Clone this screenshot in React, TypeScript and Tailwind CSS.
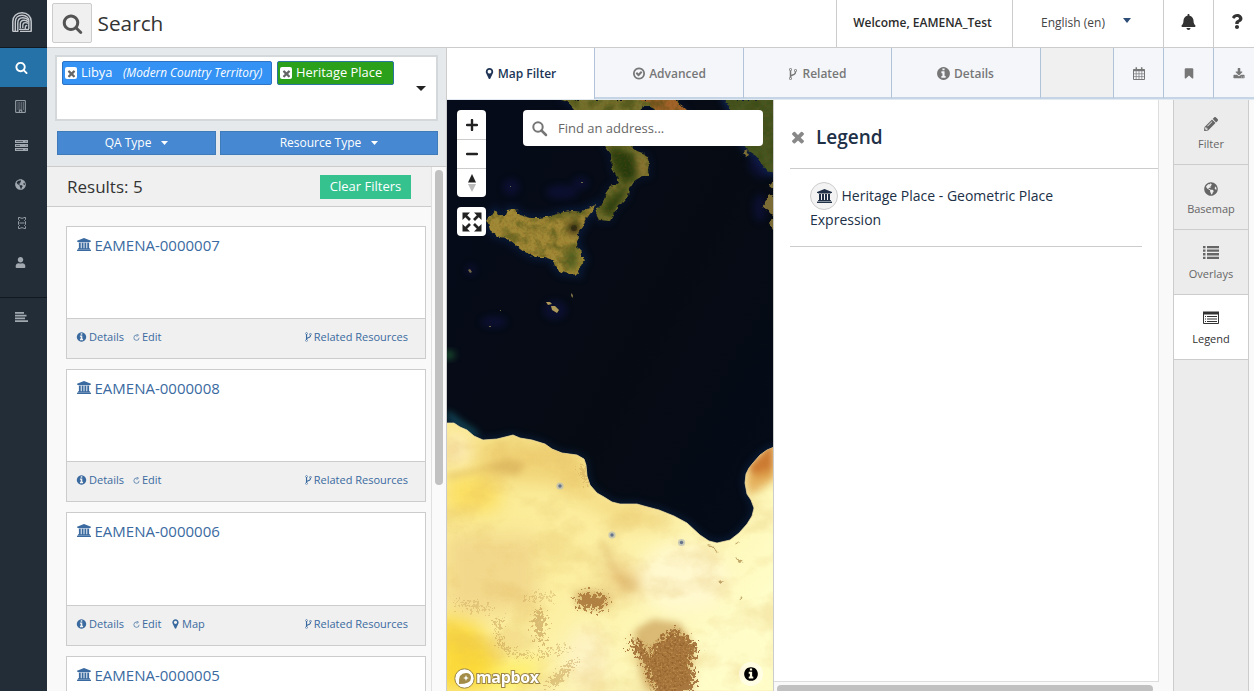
import React from "react";
import { FaBell, FaGlobeAmericas, FaPencilAlt, FaUser, FaQuestion } from "react-icons/fa";

const P = {
  search:
    "M1216 832q0-185-131.5-316.5t-316.5-131.5-316.5 131.5-131.5 316.5 131.5 316.5 316.5 131.5 316.5-131.5 131.5-316.5zm512 832q0 52-38 90t-90 38q-54 0-90-38l-343-342q-179 124-399 124-143 0-273.5-55.5t-225-150-150-225-55.5-273.5 55.5-273.5 150-225 225-150 273.5-55.5 273.5 55.5 225 150 150 225 55.5 273.5q0 220-124 399l343 343q37 37 37 90z",
  fork:
    "M672 1472q0-40-28-68t-68-28-68 28-28 68 28 68 68 28 68-28 28-68zm0-1152q0-40-28-68t-68-28-68 28-28 68 28 68 68 28 68-28 28-68zm640 128q0-40-28-68t-68-28-68 28-28 68 28 68 68 28 68-28 28-68zm96 0q0 52-26 96.5t-70 69.5q-2 287-226 414-67 38-203 81-128 40-169.5 71t-41.5 100v26q44 25 70 69.5t26 96.5q0 80-56 136t-136 56-136-56-56-136q0-52 26-96.5t70-69.5v-820q-44-25-70-69.5t-26-96.5q0-80 56-136t136-56 136 56 56 136q0 52-26 96.5t-70 69.5v497q54-26 154-57 55-17 87.5-29.5t70.5-31 59-39.5 40.5-51 28-69.5 8.5-91.5q-44-25-70-69.5t-26-96.5q0-80 56-136t136-56 136 56 56 136z",
  marker:
    "M1152 640q0-106-75-181t-181-75-181 75-75 181 75 181 181 75 181-75 75-181zm256 0q0 109-33 179l-364 774q-16 33-47.5 52t-67.5 19-67.5-19-46.5-52l-365-774q-33-70-33-179 0-212 150-362t362-150 362 150 150 362z",
  info:
    "M1152 1376v-160q0-14-9-23t-23-9h-96v-512q0-14-9-23t-23-9h-320q-14 0-23 9t-9 23v160q0 14 9 23t23 9h96v320h-96q-14 0-23 9t-9 23v160q0 14 9 23t23 9h448q14 0 23-9t9-23zm-128-896v-160q0-14-9-23t-23-9h-192q-14 0-23 9t-9 23v160q0 14 9 23t23 9h192q14 0 23-9t9-23zm640 416q0 209-103 385.5t-279.5 279.5-385.5 103-385.5-103-279.5-279.5-103-385.5 103-385.5 279.5-279.5 385.5-103 385.5 103 279.5 279.5 103 385.5z",
  university:
    "M960 0l960 384v128h-128q0 26-20.5 45t-48.5 19h-1526q-28 0-48.5-19t-20.5-45h-128v-128zm-704 640h256v768h128v-768h256v768h128v-768h256v768h128v-768h256v768h59q28 0 48.5 19t20.5 45v64h-1664v-64q0-26 20.5-45t48.5-19h59v-768zm1595 960q28 0 48.5 19t20.5 45v128h-1920v-128q0-26 20.5-45t48.5-19h1782z",
  bookmark:
    "M1420 128q23 0 44 9 33 13 52.5 41t19.5 62v1289q0 34-19.5 62t-52.5 41q-19 8-44 8-48 0-83-32l-441-424-441 424q-36 33-83 33-23 0-44-9-33-13-52.5-41t-19.5-62v-1289q0-34 19.5-62t52.5-41q21-9 44-9h1048z",
  check:
    "M1299 813l-422 422q-19 19-45 19t-45-19l-294-294q-19-19-19-45t19-45l102-102q19-19 45-19t45 19l147 147 275-275q19-19 45-19t45 19l102 102q19 19 19 45t-19 45zm141 83q0-148-73-273t-198-198-273-73-273 73-198 198-73 273 73 273 198 198 273 73 273-73 198-198 73-273zm224 0q0 209-103 385.5t-279.5 279.5-385.5 103-385.5-103-279.5-279.5-103-385.5 103-385.5 279.5-279.5 385.5-103 385.5 103 279.5 279.5 103 385.5z",
  times:
    "M1490 1322q0 40-28 68l-136 136q-28 28-68 28t-68-28l-294-294-294 294q-28 28-68 28t-68-28l-136-136q-28-28-28-68t28-68l294-294-294-294q-28-28-28-68t28-68l136-136q28-28 68-28t68 28l294 294 294-294q28-28 68-28t68 28l136 136q28 28 28 68t-28 68l-294 294 294 294q28 28 28 68z",
  download:
    "M1344 1344q0-26-19-45t-45-19-45 19-19 45 19 45 45 19 45-19 19-45zm256 0q0-26-19-45t-45-19-45 19-19 45 19 45 45 19 45-19 19-45zm128-224v320q0 40-28 68t-68 28h-1472q-40 0-68-28t-28-68v-320q0-40 28-68t68-28h465l135 136q58 56 136 56t136-56l136-136h464q40 0 68 28t28 68zm-325-569q17 41-14 70l-448 448q-18 19-45 19t-45-19l-448-448q-31-29-14-70 17-39 59-39h256v-448q0-26 19-45t45-19h256q26 0 45 19t19 45v448h256q42 0 59 39z",
};

function Icon({ d, className, box = "0 0 1792 1792" }: { d: string; className: string; box?: string }) {
  return (
    <svg viewBox={box} className={"shrink-0 fill-current " + className}>
      <path d={d} />
    </svg>
  );
}

const University = ({ className }: { className: string }) => (
  <Icon d={P.university} box="0 0 1920 1792" className={className} />
);

const Caret = ({ className }: { className: string }) => (
  <svg viewBox="0 0 10 5" preserveAspectRatio="none" className={"shrink-0 fill-current " + className}>
    <path d="M0 0h10L5 5z" />
  </svg>
);

function CalendarIcon() {
  return (
    <svg viewBox="0 0 12 13" className="h-[13px] w-3 fill-none stroke-current">
      <path d="M.5 2.5h11v10H.5z" />
      <path d="M.5 3.3h11" strokeWidth="1.8" />
      <path d="M3.2 4v8.500M6 4v8.500M8.800 4v8.500M.5 6.800h11M.5 9.600h11" strokeWidth=".7" />
      <path d="M3.300.3v3M8.700.3v3" strokeWidth="1.500" />
    </svg>
  );
}

function NavItem({ children, active }: { children: React.ReactNode; active?: boolean }) {
  return (
    <div
      className={
        active
          ? "flex h-[39px] items-center justify-center bg-[#2572a9] pr-1 text-white"
          : "flex h-[39px] items-center justify-center pr-1.5 text-[#a1a8af]"
      }
    >
      {children}
    </div>
  );
}

function Sidebar() {
  return (
    <nav className="flex w-[47px] shrink-0 flex-col bg-[#232d38]">
      <div className="flex h-12 items-center justify-center border-b border-[#111820] pb-1 pr-[3px]">
        <svg viewBox="0 0 20 20" className="h-5 w-5 fill-none stroke-[#c3c7cb]">
          <path d="M.8 19.500V9.500C.8 4.500 4.500.8 10 .8s9.200 3.700 9.200 8.700v10" strokeWidth="1.500" />
          <path d="M3.300 19.500V10c0-4 2.700-6.800 6.700-6.800 4.500 0 6.800 3 6.800 5.800v8" strokeWidth="1.400" />
          <path d="M5.800 19.500V11c0-3.300 2-5.300 5-5.300 2.500 0 4.200.8 5.500 2.300" strokeWidth="1.400" />
          <path d="M8.300 16.500V12c0-2.300 1.500-3.800 3.700-3.800 1.800 0 3.200.6 4.200 1.800" strokeWidth="1.400" />
          <path d="M10.800 16V13.500c0-1.800 1-2.800 2.700-2.800 1 0 1.800.2 2.500.8M13.300 17v-2c0-1 .8-1.500 2-1.500M.8 19.300h5.500M7 17.300h10M8 19.300h11.500" strokeWidth="1.300" />
        </svg>
      </div>
      <NavItem active>
        <Icon d={P.search} className="h-[13px] w-[13px]" />
      </NavItem>
      <NavItem>
        <svg viewBox="0 0 11 13" className="h-[13px] w-[11px] fill-none stroke-current">
          <path d="M.7.600h9.600v11.800H.7z" />
          <path d="M2.500 3h6.500M2.500 5h6.500M2.500 7h6.500M2.500 9h6.500" strokeDasharray="1.100 .7" strokeWidth="1.100" />
          <path d="M4.300 12.500v-2.300h2.500v2.300" />
        </svg>
      </NavItem>
      <NavItem>
        <svg viewBox="0 0 13 11" className="ml-0.5 h-[11px] w-[13px] fill-current">
          <path d="M0 0h13v3H0zM0 4h13v3H0zM0 8h13v3H0z" />
          <path d="M1 1h7v1H1zM1 5h4v1H1zM1 9h7v1H1zM10.500 1h1v1h-1zM10.500 5h1v1h-1zM10.500 9h1v1h-1z" fill="#232d38" opacity=".6" />
        </svg>
      </NavItem>
      <NavItem>
        <FaGlobeAmericas className="h-[11px] w-[11px]" />
      </NavItem>
      <NavItem>
        <svg viewBox="0 0 8 12" className="mb-0.5 ml-0.5 h-3 w-2 fill-none stroke-current">
          <path d="M2.500 .5H.5V2.500L1.500 3.500.5 4.500v3l1 1-1 1v2H2.500M5.500 .5h2v2l-1 1 1 1v3l-1 1 1 1v2h-2M1.500 6h5M2.500 1.200h3M2.500 10.800h3" strokeWidth=".9" />
        </svg>
      </NavItem>
      <NavItem>
        <FaUser className="h-[11px] w-[11px]" />
      </NavItem>
      <div className="mt-[15px] border-t border-[#111820]">
        <div className="flex h-[38px] items-center justify-center pr-1">
          <svg viewBox="0 0 13 10" className="h-2.5 w-[13px] fill-[#a1a8af]">
            <path d="M0 0h9v1.700H0zM0 2.700h11.500v1.700H0zM0 5.500h10v1.700H0zM0 8.300h13v1.700H0z" />
          </svg>
        </div>
      </div>
    </nav>
  );
}

function Header() {
  return (
    <header className="flex h-12 shrink-0 border-b border-[#ccc] bg-white text-[#333]">
      <div className="flex flex-1 items-start pl-[5px] pt-[3px]">
        <div className="flex h-10 w-10 items-center justify-center rounded-[2px] border border-[#ccc] bg-[#f0f0f0]">
          <Icon d={P.search} className="h-[21px] w-[21px] text-[#545454]" />
        </div>
        <h1 className="pl-[5.500px] pt-[3px] text-[20.800px] leading-[34px] text-[#333]">Search</h1>
      </div>
      <div className="flex w-[176px] items-center justify-center border-l border-[#ccc] pb-0.5 pr-1 text-[12px] font-semibold text-[#2b2b2b]">
        Welcome, EAMENA_Test
      </div>
      <div className="flex w-[151px] items-center border-l border-[#ccc] pb-0.5 pl-[28px] text-[12px] text-[#444]">
        English (en)
        <Caret className="mb-1 ml-[18px] h-[5px] w-2 text-[#2d4d77]" />
      </div>
      <div className="flex w-[50px] items-center justify-center border-l border-[#ccc] pb-1">
        <FaBell className="h-4 w-[15px]" />
      </div>
      <div className="flex w-[41px] items-center border-l border-[#ccc] pb-1 pl-[17px]">
        <FaQuestion className="h-[15px] w-3" />
      </div>
    </header>
  );
}

function Remove() {
  return (
    <span className="flex h-3 w-3 items-center justify-center rounded-[2px] bg-white text-[#666]">
      <Icon d={P.times} className="h-[11px] w-[11px]" />
    </span>
  );
}

function Card({ id, map, cut }: { id: string; map?: boolean; cut?: boolean }) {
  return (
    <div className="shrink-0 border border-[#ccc] bg-white text-[#3a6a9f]">
      <div className={"flex items-start border-b border-[#ccc] pl-2.5 pt-2 " + (map ? "h-[93px]" : "h-[92px]")}>
        <University className="mt-[3px] h-[13px] w-[14px]" />
        <span className="ml-[3.500px] text-[15px] leading-5">{id}</span>
      </div>
      {!cut && (
        <div className="flex h-[39px] items-start bg-[#f0f0f0] pl-[9px] pr-[17px] pt-2.5 text-[11px] leading-4">
          <span className="flex w-[57px] items-center">
            <Icon d={P.info} className="mr-[2px] h-[12px] w-[11px]" />
            Details
          </span>
          <span className="flex w-[37px] items-center">
            <svg viewBox="0 0 8 8" className="mr-[2px] h-[7px] w-[7px] fill-none stroke-current">
              <path d="M4.500 1.300A3 3 0 1 0 7 4.300M4 0l2.300 1.400L4 3" strokeWidth=".8" />
            </svg>
            Edit
          </span>
          {map && (
            <span className="flex items-center">
              <Icon d={P.marker} className="mr-px h-[12px] w-[11px]" />
              Map
            </span>
          )}
          <span className="ml-auto flex items-center">
            <Icon d={P.fork} className="h-[12px] w-[11px]" />
            Related Resources
          </span>
        </div>
      )}
    </div>
  );
}

function Results() {
  return (
    <section className="flex w-[400px] shrink-0 flex-col border-r border-[#ccc]">
      <div className="h-[119px] shrink-0 border-b border-[#ccc] bg-[#e5e9ec] pl-2 pt-[7px]">
        <div className="flex h-[66px] w-[383px] border-2 border-[#d5d8db] bg-white pl-[5px] pt-1">
          <div className="flex h-6 w-[210px] items-center whitespace-nowrap rounded-[2px] border border-[#2f74c4] bg-[#3392f3] pl-[2px] text-[12.900px] text-white">
            <Remove />
            <span className="ml-[4px]">Libya</span>
            <span className="ml-[10.500px] text-[11.800px] italic">(Modern Country Territory)</span>
          </div>
          <div className="ml-[5px] flex h-6 w-[117px] items-center rounded-[2px] border border-[#2b75a0] bg-[#2ba01b] pl-[2px] text-[12.900px] text-white">
            <Remove />
            <span className="ml-[4px]">Heritage Place</span>
          </div>
          <Caret className="ml-auto mr-2.5 mt-[24.500px] h-[5px] w-2.5 text-[#222]" />
        </div>
        <div className="mt-2.5 flex gap-1 pl-0.5 text-[12px] text-white">
          <div className="flex h-6 w-[159px] items-center justify-center border border-[#3f7ab9] bg-[#4688d1]">
            QA Type <Caret className="ml-2.5 h-1 w-[7px]" />
          </div>
          <div className="flex h-6 w-[218px] items-center justify-center border border-[#3f7ab9] bg-[#4688d1]">
            Resource Type <Caret className="ml-2.5 h-1 w-[7px]" />
          </div>
        </div>
      </div>
      <div className="flex min-h-0 flex-1">
        <div className="flex w-[384px] flex-col overflow-hidden bg-[#f9f9f9]">
          <div className="flex h-10 shrink-0 items-center justify-between border-b border-[#ccc] bg-[#f0f0f0] pl-5 pr-5">
            <span className="text-[17px] text-[#333]">Results: 5</span>
            <span className="flex h-6 w-[91px] items-center justify-center bg-[#35c28f] text-[13px] text-white">Clear Filters</span>
          </div>
          <div className="flex flex-col gap-2.5 pl-[19px] pr-[5px] pt-[19px]">
            <Card id="EAMENA-0000007" />
            <Card id="EAMENA-0000008" />
            <Card id="EAMENA-0000006" map />
            <Card id="EAMENA-0000005" cut />
          </div>
        </div>
        <div className="flex-1 border-l border-[#e0e0e0] bg-[#fafafa] pl-[3px] pt-[3px]">
          <div className="h-[315px] w-2 rounded-full bg-[#c1c1c1]" />
        </div>
      </div>
    </section>
  );
}

const tab =
  "flex h-[51px] shrink-0 items-center justify-center gap-[3px] border-b-2 border-r border-b-[#c5d5e6] border-r-[#b1c3d8] bg-[#f4f6fa] pt-0.5 text-[12px] font-semibold text-[#777] ";

function Tabs() {
  return (
    <div className="flex h-[52px] shrink-0 border-b border-[#e3e9f0] bg-[#f4f6fa]">
      <div className="flex w-[148px] shrink-0 items-center justify-center gap-[2px] border-r border-[#b1c3d8] bg-white pr-0.5 text-[12px] font-semibold text-[#203556]">
        <Icon d={P.marker} className="h-[15px] w-[13px]" />
        Map Filter
      </div>
      <div className={tab + "w-[149px]"}>
        <Icon d={P.check} className="h-[15px] w-[14px]" />
        Advanced
      </div>
      <div className={tab + "w-[148px] pr-0.5"}>
        <Icon d={P.fork} className="-mr-px h-[14px] w-[14px]" />
        Related
      </div>
      <div className={tab + "w-[149px] pr-0.5"}>
        <Icon d={P.info} className="h-[15px] w-[15px]" />
        Details
      </div>
      <div className="h-[51px] w-[73px] shrink-0 border-b-2 border-r border-b-[#c5d5e6] border-r-[#b1c3d8] bg-[#f0f0f0]" />
      <div className={tab + "w-[50px]"}>
        <CalendarIcon />
      </div>
      <div className={tab + "w-[50px]"}>
        <Icon d={P.bookmark} className="h-[13px] w-[12px]" />
      </div>
      <div className={tab + "w-[50px]"}>
        <Icon d={P.download} className="h-3 w-3" />
      </div>
    </div>
  );
}

const AFRICA =
  "M0 323L7 323 13 327 20 330 27 336 36 340 50 339 58 337 66 335 73 338 85 340 98 344 105 349 115 353 130 355 137 359 139 365 140 376 143 385 150 393 157 397 165 402 173 404 190 404 197 406 212 410 227 416 240 423 253 435 262 441 270 443 283 440 292 433 300 424 305 416 307 408 304 400 300 394 298 383 299 374 302 368 306 363 313 355 320 350 327 347V591H0Z";
const ITALY =
  "M113 0L121 2 128 10 150 30 158 46 164 54 165 68 170 77 172 83 164 86 160 91 158 97 156 103 150 109 149 114 152 120 163 121 166 115 171 105 176 102 181 96 182 88 186 82 190 79 196 76 202 76 201 70 202 61 198 54 190 51 184 46 180 25 190 12 197 6 203 6 209 12 240 13 230 0Z";
const GREECE = "M278 0L283 8 287 25 294 35 297 45 301 51 309 56 314 63 320 71 327 73V0Z";
const SICILY =
  "M40 119L44 116 48 110 51 115 59 115 61 110 68 109 73 115 84 118 92 118 104 116 117 112 127 111 133 112 140 109 148 105 146 110 139 119 136 127 131 133 130 147 135 152 133 156 138 160 135 165 131 171 132 175 124 174 114 172 108 166 106 160 97 157 88 157 78 152 70 146 62 139 50 136 43 130Z";

function SatelliteMap() {
  return (
    <svg viewBox="0 0 326 591" className="block h-[591px] w-[326px]">
      <defs>
        <linearGradient id="sea" x1="0" y1="0" x2="1" y2="1">
          <stop offset="0" stopColor="#060b1b" />
          <stop offset=".5" stopColor="#060b13" />
          <stop offset="1" stopColor="#040b1a" />
        </linearGradient>
        <linearGradient id="sand" x1="0" y1="0" x2="1" y2=".6">
          <stop offset="0" stopColor="#fae98f" />
          <stop offset=".5" stopColor="#fcee9f" />
          <stop offset="1" stopColor="#fffdc8" />
        </linearGradient>
        <filter id="soft" x="-50%" y="-50%" width="200%" height="200%" colorInterpolationFilters="sRGB">
          <feGaussianBlur stdDeviation="9" />
        </filter>
        <filter id="glow" x="-50%" y="-50%" width="200%" height="200%" colorInterpolationFilters="sRGB">
          <feGaussianBlur stdDeviation="3.500" />
        </filter>
        <filter id="rough" x="-20%" y="-20%" width="140%" height="140%" colorInterpolationFilters="sRGB">
          <feTurbulence type="fractalNoise" baseFrequency=".25" numOctaves="3" seed="4" result="n" />
          <feDisplacementMap in="SourceGraphic" in2="n" scale="4" xChannelSelector="R" yChannelSelector="G" />
        </filter>
        <filter id="ragged" x="-30%" y="-30%" width="160%" height="160%" colorInterpolationFilters="sRGB">
          <feTurbulence type="fractalNoise" baseFrequency=".3" numOctaves="4" seed="9" result="n" />
          <feDisplacementMap in="SourceGraphic" in2="n" scale="24" xChannelSelector="R" yChannelSelector="G" />
          <feGaussianBlur stdDeviation=".7" />
        </filter>
        <filter id="landTexture" x="0" y="0" width="100%" height="100%" colorInterpolationFilters="sRGB">
          <feTurbulence type="fractalNoise" baseFrequency=".09" numOctaves="5" seed="7" />
          <feColorMatrix values="0 0 0 0 .2  0 0 0 0 .27  0 0 0 0 .06  2.800 2 0 0 -2.200" />
        </filter>
        <filter id="sandTexture" x="0" y="0" width="100%" height="100%" colorInterpolationFilters="sRGB">
          <feTurbulence type="fractalNoise" baseFrequency=".022 .03" numOctaves="6" seed="12" />
          <feColorMatrix values="0 0 0 0 .87  0 0 0 0 .71  0 0 0 0 .36  2.800 1.500 0 0 -1.950" />
        </filter>
        <filter id="speckle" x="0" y="0" width="100%" height="100%" colorInterpolationFilters="sRGB">
          <feTurbulence type="fractalNoise" baseFrequency=".4" numOctaves="3" seed="5" />
          <feColorMatrix values="0 0 0 0 .5  0 0 0 0 .3  0 0 0 0 .1  3 0 0 0 -1.400" />
        </filter>
        <filter id="lightSpeckle" x="0" y="0" width="100%" height="100%" colorInterpolationFilters="sRGB">
          <feTurbulence type="fractalNoise" baseFrequency=".5" numOctaves="2" seed="15" />
          <feColorMatrix values="0 0 0 0 .85  0 0 0 0 .65  0 0 0 0 .35  4 0 0 0 -2.100" />
        </filter>
        <clipPath id="africa"><path d={AFRICA} /></clipPath>
        <clipPath id="north"><path d={ITALY + GREECE + SICILY} /></clipPath>
        <clipPath id="massif"><path d="M186 537l8 2 9 6 13-11 18-6 9 11 7 11-9 17 2 13-15 11H202l-4-16 1-18-10-4z" /></clipPath>
      </defs>
      <rect width="326" height="591" fill="url(#sea)" />
      <g filter="url(#glow)" fill="none" strokeWidth="6" opacity=".55">
        <path d={SICILY} stroke="#0b2a5c" />
        <path d={ITALY} stroke="#0b1f4c" strokeWidth="4" />
        <path d={GREECE} stroke="#183b8c" />
        <path d={AFRICA} stroke="#0e3365" strokeWidth="4" />
        <path d="M0 313l12 10 18 12" stroke="#1c8094" />
      </g>
      <g filter="url(#glow)" fill="#17185c" opacity=".38">
        <circle cx="64" cy="87" r="8" />
        <ellipse cx="115" cy="92" rx="16" ry="7" />
        <ellipse cx="134" cy="83" rx="8" ry="6" />
        <ellipse cx="108" cy="210" rx="12" ry="10" />
        <ellipse cx="47" cy="222" rx="13" ry="6" />
        <circle cx="24" cy="170" r="5" />
        <ellipse cx="311" cy="68" rx="8" ry="12" transform="rotate(-40 311 68)" />
        <ellipse cx="313" cy="108" rx="7" ry="14" />
      </g>
      <ellipse cx="2" cy="255" rx="6" ry="4" fill="#1c5732" filter="url(#glow)" />
      <g filter="url(#rough)">
        <path d={SICILY} fill="#a08936" />
        <path d={ITALY} fill="#72702c" />
        <path d={GREECE} fill="#465621" />
        <path d="M190 0h38l12 11-32-1-7-8z" fill="#a16329" />
        <path d="M315 107l5-7 2-6 5 3v20l-5-5zM322 122l5-4v12zM322 86l5-5v9zM299 50l3 5-3 2-3-4z" fill="#7a6c34" />
      </g>
      <g clipPath="url(#north)">
        <g filter="url(#glow)">
          <path d="M160 46l25 7 6 23-14 8-10-16zM153 110l18-18 12-8-7 14-12 18z" fill="#263b0d" />
          <path d="M190 54l11 8v13l-10 1z" fill="#8d7734" />
          <path d="M73 115l60-7 14-5-14 12-34 1z" fill="#2b4013" opacity=".75" />
          <path d="M117 155l14-8-1 22-8 1z" fill="#4e5f20" />
        </g>
        <circle cx="127" cy="128" r="6" fill="#28230f" filter="url(#glow)" />
        <circle cx="127" cy="128" r="3" fill="#28230f" opacity=".7" />
        <rect width="326" height="180" filter="url(#landTexture)" opacity=".45" />
        <rect width="326" height="180" filter="url(#speckle)" opacity=".25" />
      </g>
      <g fill="#ae995a">
        <path d="M99 202l4 0 2 2-4 1zM104 206l4 0 4 4-2 3-5-3z" />
        <path d="M21 170l2-1 2 3-2 1zM42 226h2v1h-2zM53 210h1v1h-1zM124 193l2 2v3l-2-2zM63 86h1v1h-1zM134 82h2v1h-2z" opacity=".65" />
      </g>
      <path d={AFRICA} fill="url(#sand)" stroke="#f4e4af" strokeWidth=".7" />
      <g clipPath="url(#africa)">
        <g filter="url(#soft)">
          <path d="M30 340h105l6 25 3 30 60 18 35 14-60-2-70-40-80-8z" fill="#eac361" opacity=".6" />
          <path d="M0 376l30-2 25 12-5 25-50 2z" fill="#fbdf62" />
          <path d="M0 435h90v75l-75 5-15-10z" fill="#efd287" opacity=".75" />
          <path d="M-12 515l40 10 25 32 0 34H-12z" fill="#fbd93a" />
          <path d="M50 560h50l-25 31H35z" fill="#fdee6a" />
          <path d="M160 455l33 18v22l-28 0z" fill="#eccb84" />
          <ellipse cx="237" cy="478" rx="45" ry="35" fill="#fff8cf" />
          <ellipse cx="140" cy="560" rx="22" ry="34" fill="#fdf2c2" />
          <ellipse cx="290" cy="555" rx="35" ry="38" fill="#fffcc8" />
          <ellipse cx="8" cy="350" rx="15" ry="18" fill="#fdecba" />
        </g>
        <rect y="300" width="326" height="291" filter="url(#sandTexture)" opacity=".25" />
        <g filter="url(#glow)">
          <path d="M327 340l-15 15-12 12 8 12 19-4z" fill="#c9732a" opacity=".95" />
          <path d="M300 375l27-7v12l-25 14z" fill="#e0a34c" opacity=".8" />
          <path d="M0 374l30-5 32-11 17 6-9 12-27-6-42 9z" fill="#c99e4c" opacity=".45" />
          <path d="M188 530l18-11 27 4 12 20 0 48h-46l-8-25z" fill="#cda55f" opacity=".75" />
          <path d="M126 494l14-5 22 4 2 10-10 8-24-4z" fill="#c4934f" opacity=".5" />
        </g>
        <g filter="url(#ragged)" fill="#b88b45">
          <path d="M130 496l12-4 17 4 2 8-10 6-20-3z" fill="#a87538" opacity=".85" />
          <path d="M88 512l8-2 3 12-4 12 4 8-8 0-4-16z" opacity=".5" />
          <path d="M181 543l8-4 10 11 3 7 10-17 14-11 14 8 12 10-10 17 8 12-11 20h-28l-10-24-8-14z" fill="#a3713a" opacity=".92" />
          <path d="M48 520l8-3-4 18 8 14 20 5 48-8-30 9-26 1-20-8z" opacity=".4" />
          <path d="M100 588l10-16 23-14-15 18-12 12z" opacity=".4" />
          <path d="M132 365l6 2 3 16-4 1zM78 496l29-2v4l-29 2zM3 500l22 4 18 3v3l-21-2z" opacity=".3" />
        </g>
        <path d="M150 440l11 5 10 28 20 8 1 10-14 0-16-24z" fill="#cda055" filter="url(#glow)" opacity=".3" />
        <path d="M260 444l5 1 7 9zM288 444l4-3-2 4zM288 457l8 5-4 1zM271 482l6-1-3 3zM292 498l3-2-2 4z" fill="#98702f" opacity=".6" filter="url(#rough)" />
        <g clipPath="url(#massif)">
          <rect x="180" y="520" width="75" height="71" filter="url(#speckle)" opacity=".5" />
          <rect x="180" y="520" width="75" height="71" filter="url(#lightSpeckle)" opacity=".5" />
        </g>
      </g>
      {[[113, 386], [165, 435], [234.500, 442.500]].map(([x, y]) => (
        <g key={x}>
          <circle cx={x} cy={y} r="3.600" fill="#b8bdb7" opacity=".75" />
          <circle cx={x} cy={y} r="1.700" fill="#67738a" />
        </g>
      ))}
    </svg>
  );
}

function MapPane() {
  return (
    <div className="relative w-[327px] shrink-0 overflow-hidden border-r border-[#ccc]">
      <SatelliteMap />
      <div className="absolute left-2.5 top-2.5 w-[29px] rounded-[4px] bg-white text-[#222]">
        <div className="flex h-[30px] items-center justify-center border-b border-[#ccc]">
          <svg viewBox="0 0 12 12" className="h-3 w-3 fill-none stroke-current stroke-[2.400]"><path d="M6 1v10M1 6h10" strokeLinecap="round" /></svg>
        </div>
        <div className="flex h-[29px] items-center justify-center border-b border-[#ccc]">
          <svg viewBox="0 0 12 12" className="h-3 w-3 fill-none stroke-current stroke-[2.400]"><path d="M1 6h10" strokeLinecap="round" /></svg>
        </div>
        <div className="flex h-[28px] items-center justify-center">
          <svg viewBox="0 0 8 18" className="h-[18px] w-2"><path d="M0 8.500L4 0l4 8.500z" fill="#222" /><path d="M0 10l4 8 4-8z" fill="#bbb" /></svg>
        </div>
      </div>
      <div className="absolute left-2.5 top-[107px] flex h-[29px] w-[29px] items-center justify-center rounded-[4px] bg-white">
        <svg viewBox="0 0 20 20" className="h-5 w-5 fill-none stroke-[#222]">
          <path d="M3 3l5 5M17 3l-5 5M3 17l5-5M17 17l-5-5" strokeWidth="2.800" />
          <path d="M.5.5h7.500L.5 8zM19.500.5H12l7.500 7.500zM.5 19.500H8L.5 12zM19.500 19.500H12l7.500-7.500z" fill="#222" stroke="none" />
        </svg>
      </div>
      <div className="absolute left-[76px] top-2.5 flex h-9 w-60 items-center rounded-[4px] bg-white pl-[9px] pt-px text-[13px] text-[#666]">
        <svg viewBox="0 0 16 16" className="mr-[10px] h-4 w-4 fill-none stroke-[#757575]"><circle cx="6" cy="6" r="4.700" strokeWidth="2" /><path d="M9.500 9.500l4.500 4.500" strokeWidth="2.500" strokeLinecap="round" /></svg>
        Find an address...
      </div>
      <div className="absolute bottom-px left-[7px] flex items-center">
        <svg viewBox="0 0 88 23" className="h-[23px] w-[88px] overflow-visible">
          <circle cx="10.500" cy="11.500" r="9.700" fill="#fff" stroke="#9b8646" strokeWidth="1" />
          <path d="M5 17q-1-11 7-11 5 0 5 5 0 6-12 6z" fill="#a28c47" />
          <path d="M12 8l.8 2.200 2.200.8-2.200.8L12 14l-.8-2.200L9 11l2.200-.8z" fill="#fff" />
          <text x="22" y="16" className="font-['Open_Sans'] text-[16px] font-bold" fill="#fff" stroke="#9b8646" strokeWidth="2" paintOrder="stroke" textLength="63">mapbox</text>
        </svg>
      </div>
      <div className="absolute bottom-[5px] right-2.5 flex h-6 w-6 items-center justify-center rounded-full bg-white/50">
        <Icon d={P.info} className="h-4 w-4 text-black" />
      </div>
    </div>
  );
}

function ToolItem({ label, children, active }: { label: string; children: React.ReactNode; active?: boolean }) {
  return (
    <div className={"flex h-[65px] flex-col items-center border-b border-[#ccc] pt-4 text-[11px] " + (active ? "bg-white text-[#333]" : "text-[#666]")}>
      <div className="flex h-4 items-center">{children}</div>
      <span className="mt-[4px] leading-4">{label}</span>
    </div>
  );
}

function RightPane() {
  return (
    <>
      <div className="flex min-w-0 flex-1 flex-col bg-[#f9f9f9]">
        <div className="h-[582px] w-[385px] shrink-0 border-b border-r border-[#ddd] bg-white text-[#203047]">
          <div className="ml-4 flex h-[69px] items-center border-b border-[#ccc] pt-[5px]">
            <Icon d={P.times} className="ml-[-1.500px] h-[18px] w-[18px] text-[#888]" />
            <h2 className="ml-[9.500px] text-[19px] font-semibold leading-6">Legend</h2>
          </div>
          <div className="ml-4 mr-4 h-[78px] border-b border-[#ccc] pl-5 pt-[13px] text-[14px]">
            <div className="flex h-7 items-center">
              <span className="mr-[3.500px] flex h-7 w-7 items-center justify-center rounded-full border border-[#ccc] bg-[#f3f3f3]">
                <University className="h-[14px] w-[15px]" />
              </span>
              <span className="-mt-0.5">Heritage Place - Geometric Place</span>
            </div>
            <div className="leading-5">Expression</div>
          </div>
        </div>
        <div className="ml-[3px] mt-[3px] h-2 w-[376px] shrink-0 rounded-full bg-[#c1c1c1]" />
      </div>
      <aside className="w-[76px] shrink-0 border-l border-r border-[#ccc] bg-[#ececec]">
        <ToolItem label="Filter"><FaPencilAlt className="h-[14px] w-[14px]" /></ToolItem>
        <ToolItem label="Basemap"><FaGlobeAmericas className="h-[14px] w-[14px]" /></ToolItem>
        <ToolItem label="Overlays">
          <svg viewBox="0 0 16 13" className="mb-1 h-[13px] w-4 fill-current"><path d="M0 0h2.500v2.300H0zM0 3.500h2.500v2.300H0zM0 7.100h2.500v2.300H0zM0 10.700h2.500V13H0zM4 0h12v2.300H4zM4 3.500h12v2.300H4zM4 7.100h12v2.300H4zM4 10.700h12V13H4z" /></svg>
        </ToolItem>
        <ToolItem label="Legend" active>
          <svg viewBox="0 0 16 13" className="mb-1 h-[13px] w-4 fill-none stroke-current"><path d="M.5 1.500h15v11H.5z" /><path d="M0 2h16" strokeWidth="3" /><path d="M2 5.500h1M2 8h1M2 10.500h1M4 5.500h10M4 8h10M4 10.500h10" /></svg>
        </ToolItem>
      </aside>
      <div className="w-[5px] shrink-0 bg-[#f9f9f9]" />
    </>
  );
}

export default function App() {
  return (
    <div className="flex h-[691px] w-[1254px] overflow-hidden bg-white font-['Open_Sans','Noto_Sans',sans-serif]">
      <Sidebar />
      <div className="flex min-w-0 flex-1 flex-col">
        <Header />
        <div className="flex min-h-0 flex-1">
          <Results />
          <main className="flex min-w-0 flex-1 flex-col overflow-hidden">
            <Tabs />
            <div className="flex min-h-0 flex-1">
              <MapPane />
              <RightPane />
            </div>
          </main>
        </div>
      </div>
    </div>
  );
}
